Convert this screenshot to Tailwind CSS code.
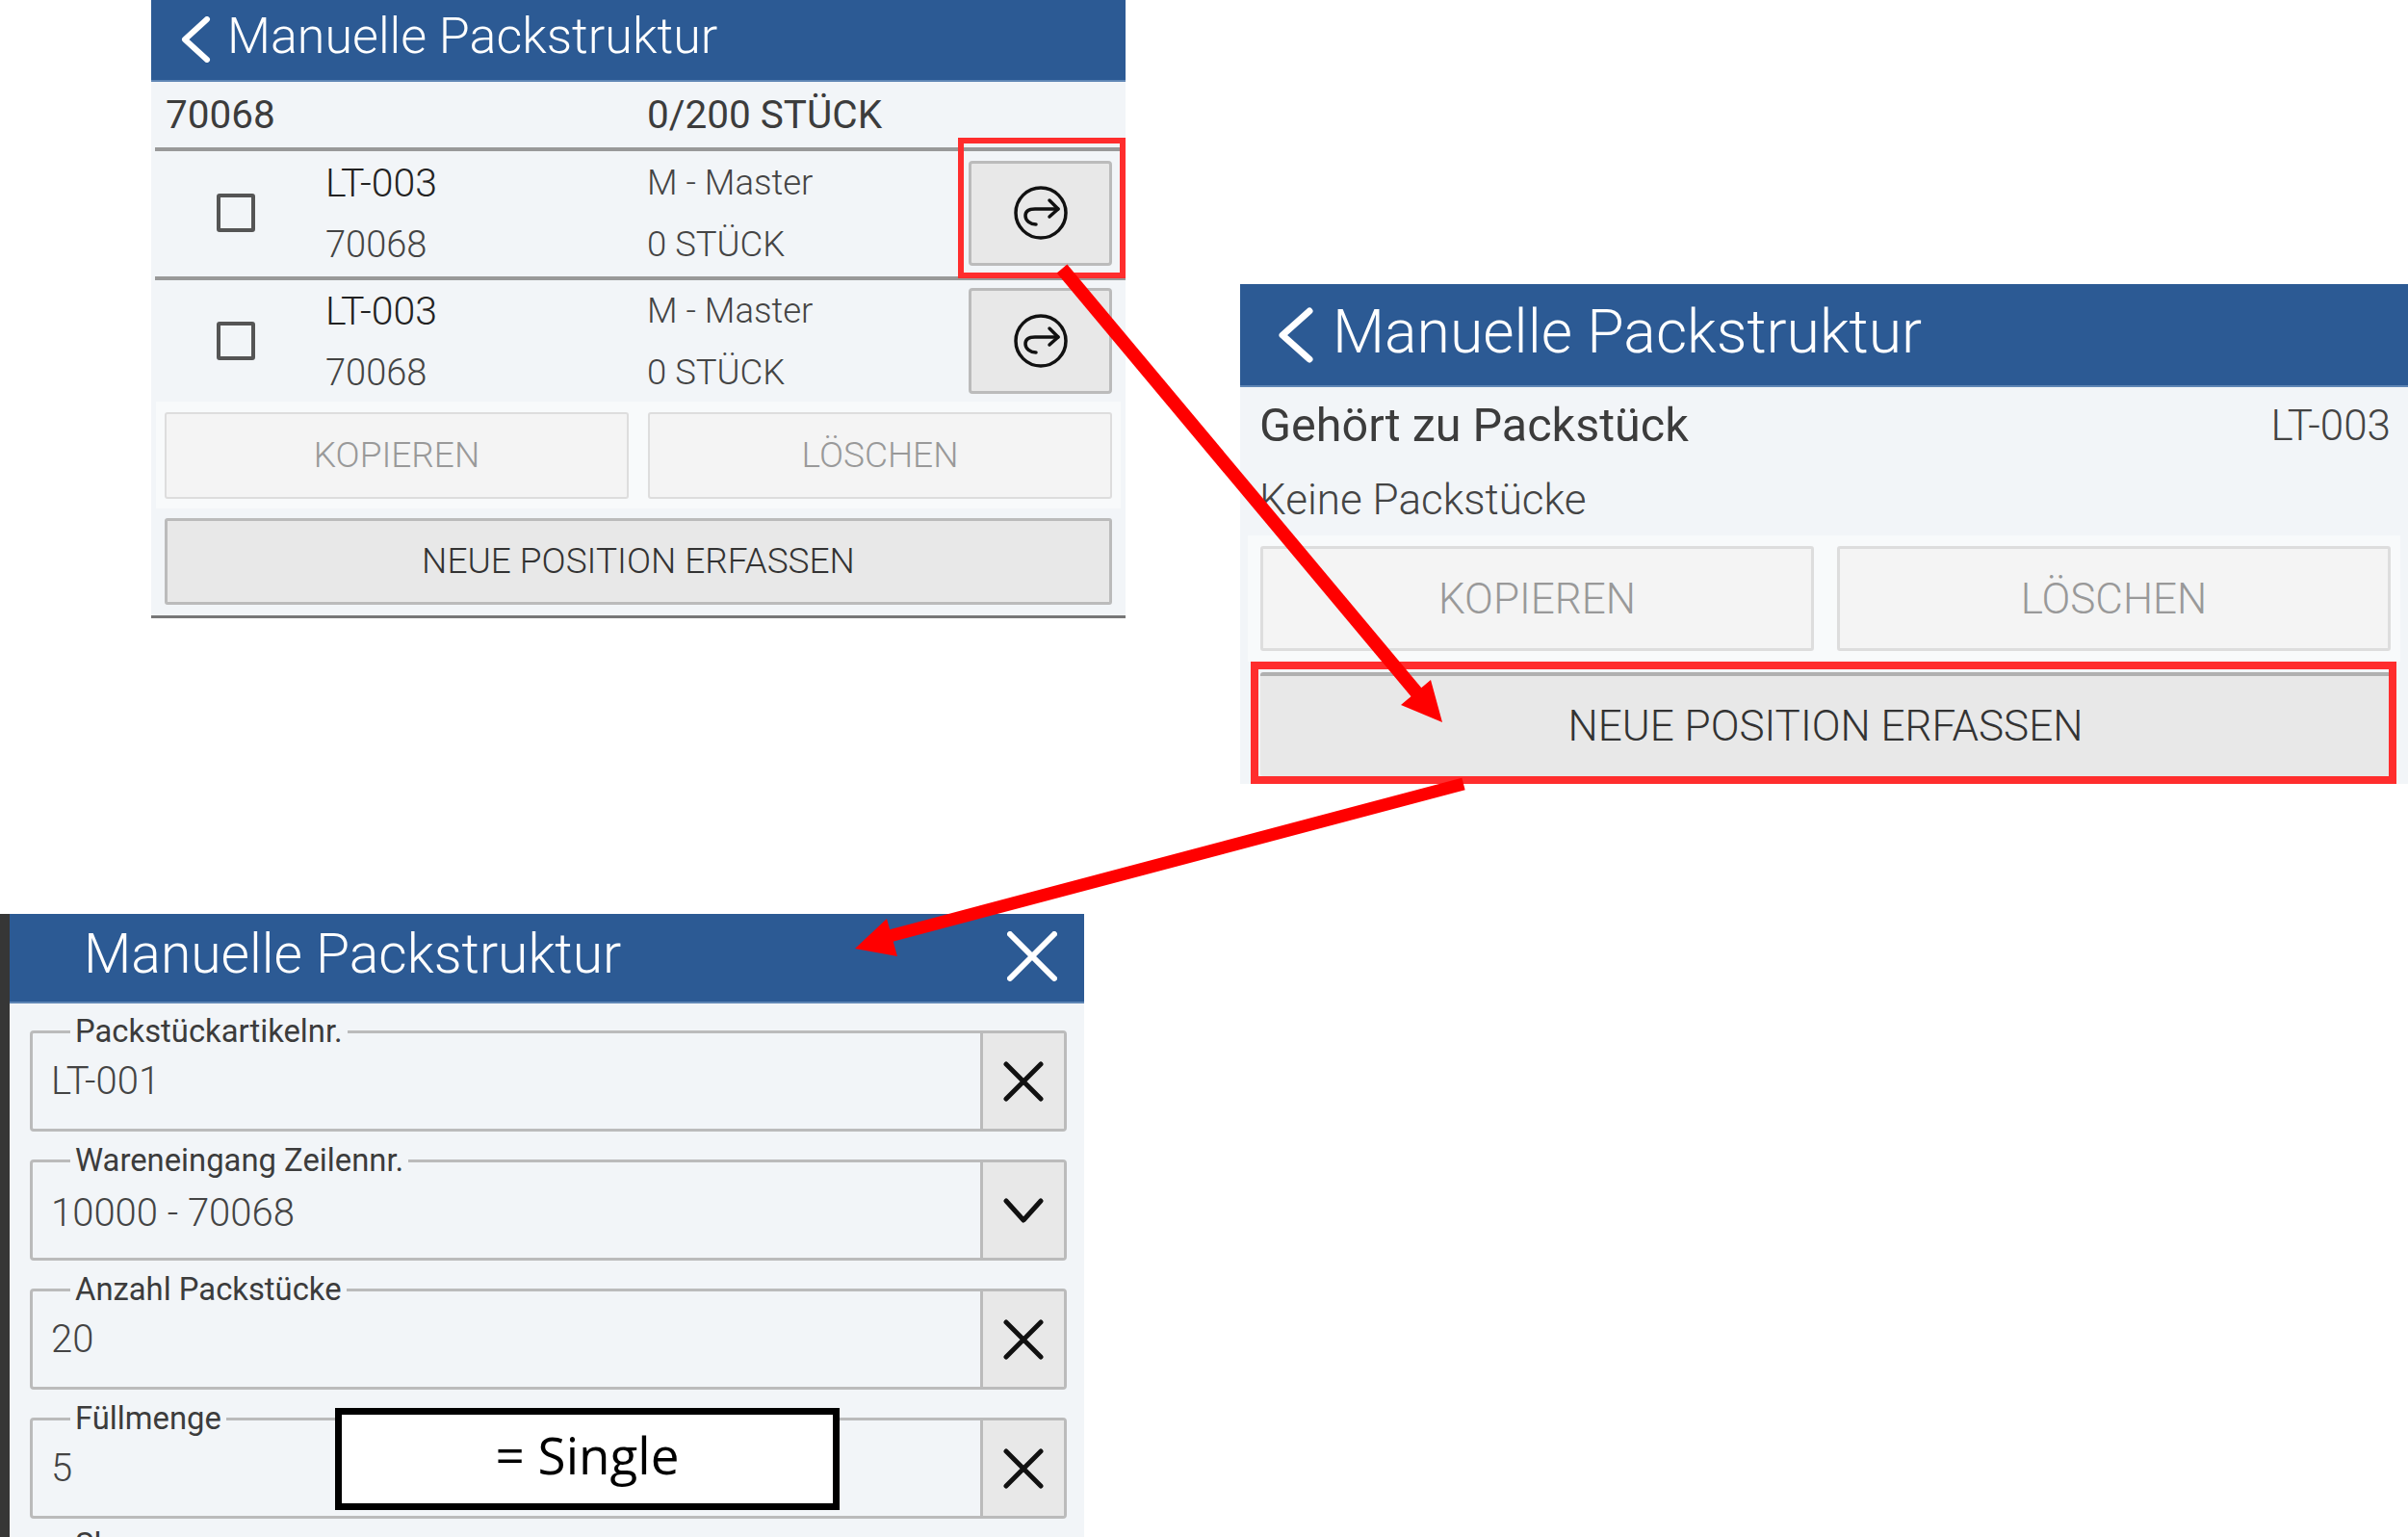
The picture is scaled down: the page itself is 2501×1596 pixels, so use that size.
<!DOCTYPE html>
<html lang="de">
<head>
  <meta charset="UTF-8"/>
  <title>Manuelle Packstruktur</title>
  <script src="https://cdn.jsdelivr.net/npm/@tailwindcss/browser@4"></script>
</head>
<body class="bg-white">
<div class="relative w-[2501px] h-[1596px] overflow-hidden bg-white font-['Roboto',sans-serif]">

  <!-- Panel 1: Liste -->
  <section class="absolute left-[157px] top-0 w-[1012px] h-[642px] bg-[#f2f5f8] border-b-[3px] border-[#777]">
    <header class="h-[85px] bg-[#2c5a94] border-b-2 border-[#5f86b5] flex items-center text-white">
      <svg class="ml-[30px] w-[34px] h-[48px] -mt-[2px]" viewBox="0 0 34 48" fill="none" stroke="currentColor" stroke-width="6" stroke-linecap="round" stroke-linejoin="round"><path d="M28 3 L5 24 L28 45"/></svg>
      <h1 class="ml-[15px] text-[52px] leading-none font-light -mt-[7px]">Manuelle Packstruktur</h1>
    </header>
    <div class="h-[68px] flex items-center text-[40.5px] text-[#3c3c3c] font-normal">
      <span class="ml-[15px] w-[500px]">70068</span>
      <span>0/200 STÜCK</span>
    </div>
    <div class="ml-[4px] h-[134px] border-t-4 border-[#999] flex items-center">
      <span class="ml-[64px] -mt-[2px] w-[40px] h-[40px] border-4 border-[#555] rounded-[3px]"></span>
      <div class="ml-[73px] w-[334px] flex flex-col text-[38px] font-light leading-[64px]">
        <span class="text-[#222] text-[41px]">LT-003</span>
        <span class="text-[#444]">70068</span>
      </div>
      <div class="flex-1 flex flex-col text-[36.5px] font-light leading-[64px] text-[#444]">
        <span>M - Master</span>
        <span>0 STÜCK</span>
      </div>
      <button class="mr-[14px] -mt-[2px] w-[149px] h-[109px] bg-[#e8e8e8] border-[3px] border-[#bbb] rounded-[4px] flex items-center justify-center">
        <svg class="w-[60px] h-[60px]" viewBox="0 0 60 60" fill="none" stroke="#111" stroke-width="3.5" stroke-linecap="round" stroke-linejoin="round"><circle cx="30" cy="30" r="26"/><path d="M48 26 H24 C17 26 14 29 14 33 C14 38 19 42 25 42"/><path d="M39 17 L48 26 L39 34"/></svg>
      </button>
    </div>
    <div class="ml-[4px] h-[130px] border-t-4 border-[#999] flex items-center">
      <span class="ml-[64px] w-[40px] h-[40px] border-4 border-[#555] rounded-[3px]"></span>
      <div class="ml-[73px] mt-[2px] w-[334px] flex flex-col text-[38px] font-light leading-[64px]">
        <span class="text-[#222] text-[41px]">LT-003</span>
        <span class="text-[#444]">70068</span>
      </div>
      <div class="flex-1 mt-[2px] flex flex-col text-[36.5px] font-light leading-[64px] text-[#444]">
        <span>M - Master</span>
        <span>0 STÜCK</span>
      </div>
      <button class="mr-[14px] w-[149px] h-[110px] bg-[#e8e8e8] border-[3px] border-[#bbb] rounded-[4px] flex items-center justify-center">
        <svg class="w-[60px] h-[60px]" viewBox="0 0 60 60" fill="none" stroke="#111" stroke-width="3.5" stroke-linecap="round" stroke-linejoin="round"><circle cx="30" cy="30" r="26"/><path d="M48 26 H24 C17 26 14 29 14 33 C14 38 19 42 25 42"/><path d="M39 17 L48 26 L39 34"/></svg>
      </button>
    </div>
    <div class="mx-[5px] h-[111px] bg-[#f8fafb] flex items-center gap-[20px] px-[9px]">
      <button class="flex-1 h-[90px] bg-[#f4f4f4] border-2 border-[#ddd] rounded-[3px] text-[37px] font-light text-[#999]">KOPIEREN</button>
      <button class="flex-1 h-[90px] bg-[#f4f4f4] border-2 border-[#ddd] rounded-[3px] text-[37px] font-light text-[#999]">LÖSCHEN</button>
    </div>
    <div class="px-[14px] pt-[10px]">
      <button class="w-full h-[90px] bg-[#e8e8e8] border-[3px] border-[#bbb] rounded-[3px] text-[37px] font-light text-[#333]">NEUE POSITION ERFASSEN</button>
    </div>
  </section>

  <!-- Panel 2: Details -->
  <section class="absolute left-[1288px] top-[295px] w-[1213px] h-[519px] bg-[#f2f5f8]">
    <header class="h-[107px] bg-[#2c5a94] border-b-2 border-[#5f86b5] flex items-center text-white">
      <svg class="ml-[36px] w-[44px] h-[58px]" viewBox="0 0 44 58" fill="none" stroke="currentColor" stroke-width="7" stroke-linecap="round" stroke-linejoin="round"><path d="M36 4 L8 29 L36 54"/></svg>
      <h1 class="ml-[16px] text-[62.5px] leading-none font-light -mt-[5px]">Manuelle Packstruktur</h1>
    </header>
    <div class="h-[80px] flex items-center justify-between pl-[20px] pr-[18px]">
      <span class="text-[48.5px] text-[#3c3c3c]">Gehört zu Packstück</span>
      <span class="text-[44px] font-light text-[#444]">LT-003</span>
    </div>
    <div class="h-[74px] pl-[20px] flex items-center text-[44px] font-light text-[#444]">Keine Packstücke</div>
    <div class="mx-[8px] h-[131px] bg-[#f8fafb] flex items-center gap-[24px] pl-[13px] pr-[10px]">
      <button class="flex-1 h-[109px] bg-[#f4f4f4] border-[3px] border-[#ddd] rounded-[3px] text-[44px] font-light text-[#999]">KOPIEREN</button>
      <button class="flex-1 h-[109px] bg-[#f4f4f4] border-[3px] border-[#ddd] rounded-[3px] text-[44px] font-light text-[#999]">LÖSCHEN</button>
    </div>
    <div class="pl-[21px] pr-[18px] pt-[11px]">
      <button class="w-full h-[108px] bg-[#e8e8e8] border-t-4 border-[#b0b0b0] rounded-[3px] text-[44px] font-light text-[#333]">NEUE POSITION ERFASSEN</button>
    </div>
  </section>

  <!-- Panel 3: Formular -->
  <section class="absolute left-0 top-[949px] w-[1126px] h-[660px] bg-[#f2f5f8] border-l-[10px] border-[#363636]">
    <header class="h-[93px] bg-[#2c5a94] border-b-2 border-[#5f86b5] flex items-center justify-between text-white">
      <h1 class="ml-[77px] text-[57px] leading-none font-light -mt-[8px]">Manuelle Packstruktur</h1>
      <svg class="mr-[28px] -mt-[3px] w-[52px] h-[52px]" viewBox="0 0 52 52" fill="none" stroke="currentColor" stroke-width="6" stroke-linecap="round"><path d="M3 3 L49 49 M49 3 L3 49"/></svg>
    </header>
    <div class="pl-[21px] pr-[18px] pt-[28px] flex flex-col gap-[29px]">
      <div class="relative h-[105px] border-[3px] border-[#bbb] rounded-[4px] flex">
        <span class="absolute left-[39px] -top-[19px] px-[5px] bg-[#f2f5f8] text-[32.8px] leading-[34px] text-[#3c3c3c]">Packstückartikelnr.</span>
        <span class="flex-1 pl-[19px] flex items-center text-[40px] font-light text-[#444]">LT-001</span>
        <button class="w-[87px] bg-[#e8e8e8] border-l-[3px] border-[#bbb] flex items-center justify-center">
          <svg class="w-[42px] h-[42px]" viewBox="0 0 42 42" fill="none" stroke="#111" stroke-width="5" stroke-linecap="round"><path d="M3 3 L39 39 M39 3 L3 39"/></svg>
        </button>
      </div>
      <div class="relative h-[105px] border-[3px] border-[#bbb] rounded-[4px] flex">
        <span class="absolute left-[39px] -top-[19px] px-[5px] bg-[#f2f5f8] text-[32.8px] leading-[34px] text-[#3c3c3c]">Wareneingang Zeilennr.</span>
        <span class="flex-1 pl-[19px] pt-[6px] flex items-center text-[40px] font-light text-[#444]">10000 - 70068</span>
        <button class="w-[87px] bg-[#e8e8e8] border-l-[3px] border-[#bbb] flex items-center justify-center">
          <svg class="w-[42px] h-[26px]" viewBox="0 0 42 26" fill="none" stroke="#111" stroke-width="5" stroke-linecap="round" stroke-linejoin="round"><path d="M3 3 L21 23 L39 3"/></svg>
        </button>
      </div>
      <div class="relative h-[105px] border-[3px] border-[#bbb] rounded-[4px] flex">
        <span class="absolute left-[39px] -top-[19px] px-[5px] bg-[#f2f5f8] text-[32.8px] leading-[34px] text-[#3c3c3c]">Anzahl Packstücke</span>
        <span class="flex-1 pl-[19px] flex items-center text-[40px] font-light text-[#444]">20</span>
        <button class="w-[87px] bg-[#e8e8e8] border-l-[3px] border-[#bbb] flex items-center justify-center">
          <svg class="w-[42px] h-[42px]" viewBox="0 0 42 42" fill="none" stroke="#111" stroke-width="5" stroke-linecap="round"><path d="M3 3 L39 39 M39 3 L3 39"/></svg>
        </button>
      </div>
      <div class="relative h-[105px] border-[3px] border-[#bbb] rounded-[4px] flex">
        <span class="absolute left-[39px] -top-[19px] px-[5px] bg-[#f2f5f8] text-[32.8px] leading-[34px] text-[#3c3c3c]">Füllmenge</span>
        <span class="flex-1 pl-[19px] flex items-center text-[40px] font-light text-[#444]">5</span>
        <button class="w-[87px] bg-[#e8e8e8] border-l-[3px] border-[#bbb] flex items-center justify-center">
          <svg class="w-[42px] h-[42px]" viewBox="0 0 42 42" fill="none" stroke="#111" stroke-width="5" stroke-linecap="round"><path d="M3 3 L39 39 M39 3 L3 39"/></svg>
        </button>
      </div>
      <div class="relative h-[105px] border-[3px] border-[#bbb] rounded-[4px] flex">
        <span class="absolute left-[39px] -top-[22px] px-[5px] text-[32.8px] leading-[34px] text-[#3c3c3c]">Sl</span>
      </div>
    </div>
  </section>

  <!-- Anmerkung -->
  <div class="absolute left-[348px] top-[1462px] w-[524px] h-[106px] bg-white border-[7px] border-black flex items-center justify-center text-[53px] font-medium text-black font-['Open_Sans',sans-serif] pb-[8px]">= Single</div>

  <!-- Rote Markierungen -->
  <div class="absolute left-[995px] top-[143px] w-[174px] h-[146px] border-[6px] border-[#ff2d2d]"></div>
  <div class="absolute left-[1299px] top-[687px] w-[1190px] h-[127px] border-[8px] border-[#ff2d2d]"></div>

  <!-- Pfeile -->
  <svg class="absolute left-0 top-0 w-[2501px] h-[1596px] pointer-events-none" viewBox="0 0 2501 1596" fill="#ff0000">
    <path d="M1103 279 L1472 720" stroke="#ff0000" stroke-width="14"/>
    <polygon points="1498,750 1486,706 1455,732"/>
    <path d="M1520 814 L920 973" stroke="#ff0000" stroke-width="13"/>
    <polygon points="888,985 921,954 932,993"/>
  </svg>
</div>
</body>
</html>
